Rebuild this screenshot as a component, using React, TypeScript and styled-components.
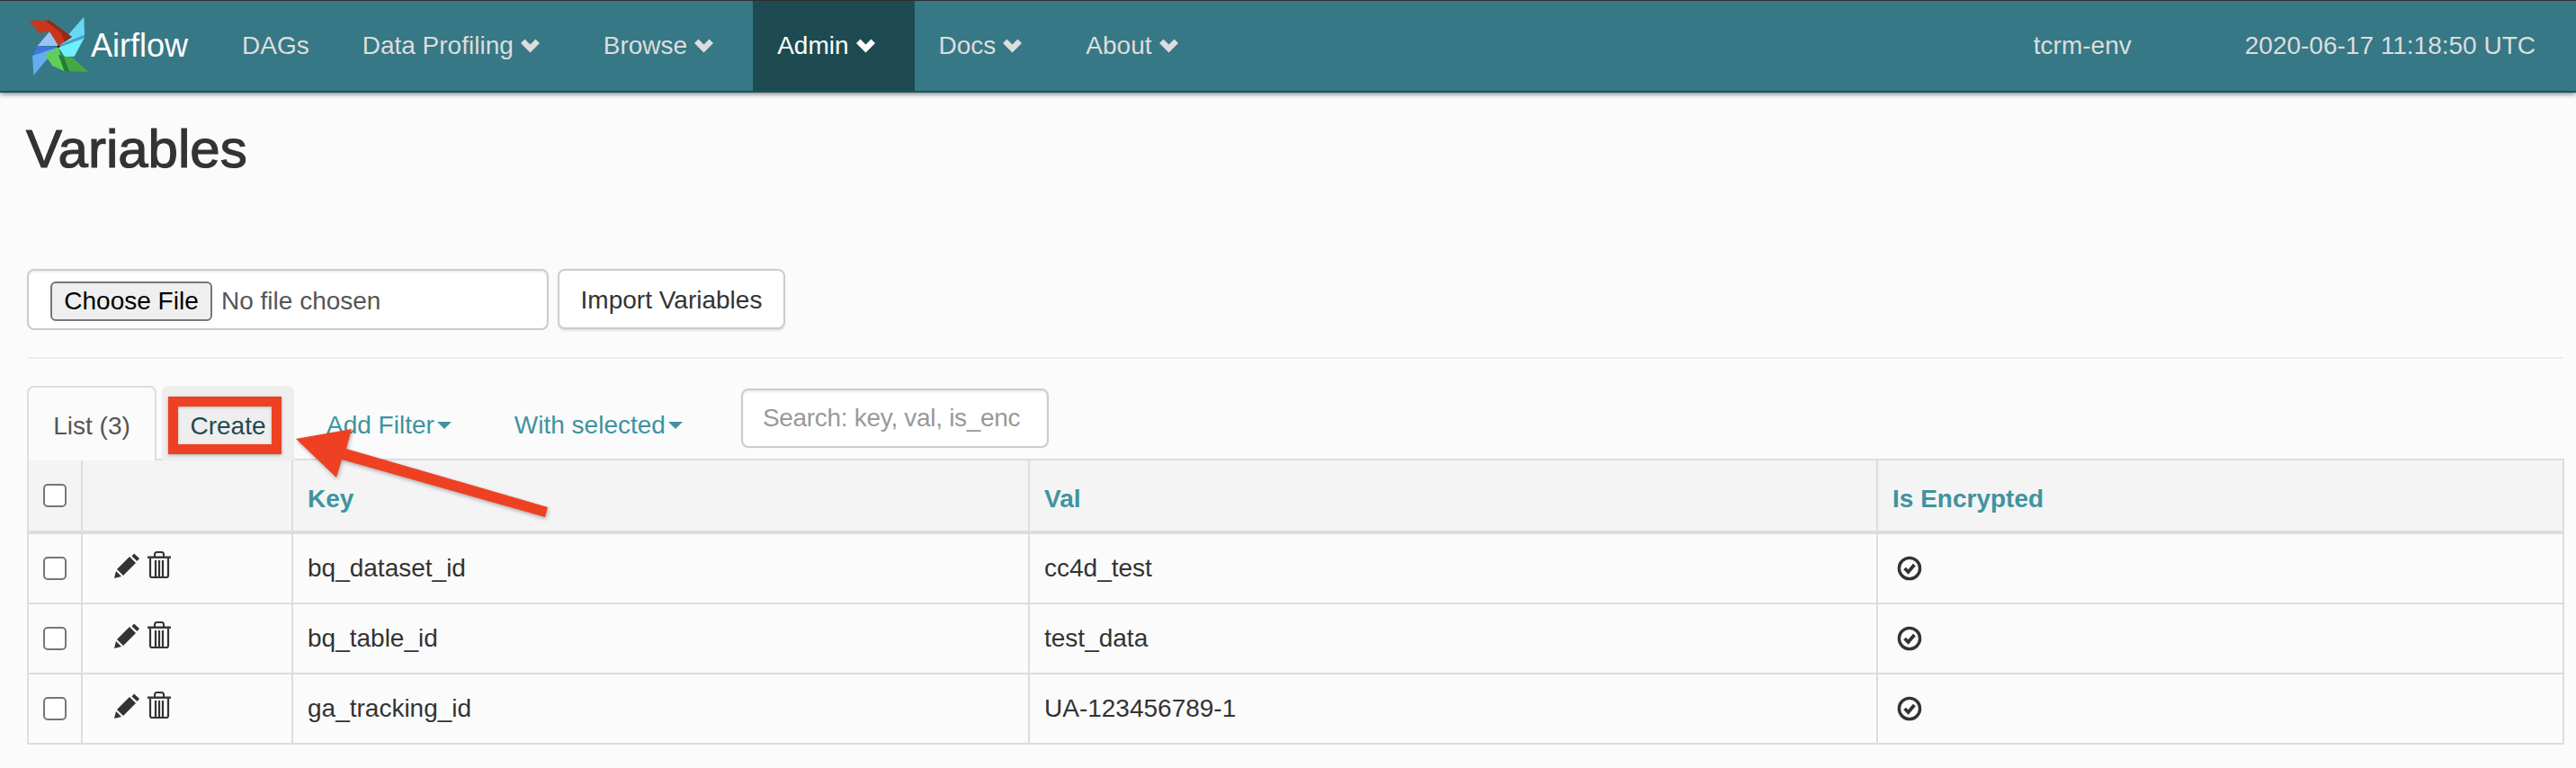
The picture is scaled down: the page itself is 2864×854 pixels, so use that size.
import React from 'react';
import styled, { createGlobalStyle } from 'styled-components';

const GlobalStyle = createGlobalStyle`
  html, body {
    margin: 0;
    padding: 0;
    background: #fbfbfb;
    color: #333;
    font-family: 'Liberation Sans', Arial, sans-serif;
    font-size: 28px;
  }
`;

const Page = styled.div`
  position: relative;
  width: 2864px;
  height: 854px;
  overflow: hidden;
`;

const NavBar = styled.nav`
  display: flex;
  align-items: stretch;
  height: 100px;
  background: #367885;
  border-top: 1px solid #2e2e2e;
  border-bottom: 2px solid #1f525c;
  box-shadow: 0 2px 5px rgba(0, 0, 0, 0.45);
  padding-left: 30px;
`;

const Brand = styled.a`
  display: flex;
  align-items: center;
  gap: 1px;
  width: 212px;
  color: #fff;
  font-size: 36px;
`;

const NavLink = styled.a<{ $active?: boolean; $plain?: boolean }>`
  display: flex;
  align-items: center;
  gap: 8px;
  padding: 0 ${(p) => (p.$plain ? '32px' : '44px')} 0 27px;
  color: ${(p) => (p.$active ? '#fff' : '#ddd')};
  background: ${(p) => (p.$active ? '#1e4a52' : 'transparent')};
`;

const NavRight = styled.div`
  display: flex;
  align-items: center;
  margin-left: auto;
  padding-right: 45px;
  color: #ddd;
  gap: 126px;
`;

const Content = styled.main`
  padding: 0 15px 0 30px;
`;

const Title = styled.h2`
  margin: 30px 0 100px -1px;
  font-size: 60px;
  font-weight: 500;
  line-height: 66px;
  color: #333;
  -webkit-text-stroke: 1.2px #333;
`;

const ImportRow = styled.form`
  display: flex;
  align-items: flex-start;
  gap: 10px;
  margin: 0;
`;

const FileInput = styled.input`
  box-sizing: border-box;
  width: 580px;
  height: 68px;
  padding: 12px 24px;
  background: #fff;
  border: 2px solid #ccc;
  border-radius: 8px;
  box-shadow: inset 0 2px 2px rgba(0, 0, 0, 0.075);
  color: #555;
  font-family: 'Liberation Sans', Arial, sans-serif;
  font-size: 28px;

  &::file-selector-button {
    box-sizing: border-box;
    width: 180px;
    height: 44px;
    margin-right: 10px;
    padding: 0;
    background: #efefef;
    border: 2px solid #767676;
    border-radius: 6px;
    color: #000;
    font-family: 'Liberation Sans', Arial, sans-serif;
    font-size: 28px;
  }
`;

const ImportButton = styled.button`
  box-sizing: border-box;
  height: 67px;
  width: 253px;
  padding: 2px 0 0;
  background: #fff;
  border: 2px solid #ccc;
  border-radius: 8px;
  box-shadow: 0 2px 2px rgba(0, 0, 0, 0.1);
  color: #333;
  font-family: 'Liberation Sans', Arial, sans-serif;
  font-size: 28px;
`;

const Divider = styled.hr`
  height: 2px;
  margin: 30px 0;
  border: 0;
  background: #eee;
`;

const TabsRow = styled.div`
  position: relative;
  z-index: 1;
  display: flex;
  align-items: stretch;
  height: 83px;
  margin-bottom: -2px;
`;

const Tab = styled.a<{ $active?: boolean }>`
  position: relative;
  box-sizing: border-box;
  display: flex;
  align-items: center;
  justify-content: center;
  width: ${(p) => (p.$active ? '144px' : '147px')};
  margin-right: ${(p) => (p.$active ? '6px' : '0')};
  padding-top: 4px;
  background: ${(p) => (p.$active ? '#fbfbfb' : '#eee')};
  border: 2px solid ${(p) => (p.$active ? '#ddd' : '#eee')};
  border-bottom: 0;
  border-radius: 8px 8px 0 0;
  color: ${(p) => (p.$active ? '#555' : '#1e4a52')};
`;

const RedBox = styled.span`
  position: absolute;
  left: 5px;
  top: 10px;
  box-sizing: border-box;
  width: 126px;
  height: 64px;
  border: 11px solid #ee4124;
  box-shadow: 0 1px 3px rgba(0, 0, 0, 0.3), inset 0 1px 3px rgba(0, 0, 0, 0.25);
`;

const FilterLink = styled.a`
  display: flex;
  align-items: center;
  gap: 3px;
  padding: 4px 34px 0 36px;
  color: #40939f;
`;

const Caret = styled.span`
  width: 0;
  height: 0;
  border-top: 8px solid #40939f;
  border-left: 8px solid transparent;
  border-right: 8px solid transparent;
`;

const SearchInput = styled.input`
  box-sizing: border-box;
  width: 342px;
  height: 66px;
  margin: 3px 0 0 31px;
  padding: 0 22px;
  background: #fff;
  border: 2px solid #ccc;
  border-radius: 8px;
  box-shadow: inset 0 2px 2px rgba(0, 0, 0, 0.075);
  font-family: 'Liberation Sans', Arial, sans-serif;
  font-size: 28px;
  letter-spacing: -0.3px;
  color: #555;

  &::placeholder {
    color: #999;
    opacity: 1;
  }
`;

const Table = styled.table`
  width: 2819px;
  table-layout: fixed;
  border-collapse: collapse;
  font-size: 28px;
`;

const HeadCell = styled.th`
  height: 70px;
  padding: 8px 16px 0;
  background: #f4f4f4;
  border: 2px solid #ddd;
  border-bottom-width: 4px;
  color: #40939f;
  font-weight: 700;
  text-align: left;
  vertical-align: middle;
`;

const Cell = styled.td`
  height: 76px;
  padding: 0 16px;
  border: 2px solid #ddd;
  vertical-align: middle;
`;

const Check = styled.input<{ $raised?: boolean }>`
  appearance: none;
  display: block;
  box-sizing: border-box;
  width: 26px;
  height: 26px;
  margin: ${(p) => (p.$raised ? '-8px 0 0' : '0')};
  background: #fff;
  border: 2px solid #767676;
  border-radius: 5px;
`;

const Actions = styled.div`
  display: flex;
  align-items: flex-end;
  gap: 9px;
  padding: 0 0 8px 19px;
`;

const OkWrap = styled.div`
  width: 28px;
  height: 28px;
  margin-left: 5px;
`;

const ArrowLayer = styled.svg`
  position: absolute;
  left: 320px;
  top: 470px;
  z-index: 2;
  overflow: visible;
  filter: drop-shadow(1px 2px 2px rgba(0, 0, 0, 0.3));
`;

const Chevron = () => (
  <svg width="21" height="16" viewBox="0 0 21 16">
    <polygon fill="currentColor" points="0,5 4.5,0.5 10.5,6.5 16.5,0.5 21,5 10.5,15.5" />
  </svg>
);

const Logo = () => (
  <svg width="70" height="70" viewBox="90 50 210 210">
    <polygon fill="#66d8f5" points="280,58 195,155 282,118" />
    <polygon fill="#4c9fd0" points="195,157 282,118 280,135 232,152" />
    <polygon fill="#6ef0fb" points="195,160 280,130 248,190 216,192" />
    <polygon fill="#c9361c" points="97,70 165,70 240,125 195,155 165,108 130,112" />
    <polygon fill="#8f2b18" points="150,70 165,70 240,125 215,142 205,112" />
    <polygon fill="#9ac4f5" points="165,108 125,155 195,155" />
    <polygon fill="#3f78dc" points="125,155 108,188 190,160" />
    <polygon fill="#63aef2" points="108,188 112,253 190,160" />
    <polygon fill="#5fcf58" points="150,185 195,158 215,240 175,222" />
    <polygon fill="#46a845" points="195,185 242,195 295,241 215,240" />
    <polygon fill="#1f7f33" points="195,185 212,190 232,241 215,240" />
    <circle cx="195" cy="157" r="4" fill="#12222a" />
  </svg>
);

const PencilIcon = () => (
  <svg width="28" height="28" viewBox="0 0 28 28">
    <polygon fill="#333" points="0,28 2,20 8,26" />
    <polygon fill="#333" points="3,18 17,4 24,11 10,25" />
    <polygon fill="#333" points="22,0.5 28,6 25.5,9 19.5,3.5" />
  </svg>
);

const TrashIcon = () => (
  <svg width="26" height="30" viewBox="0 0 26 30">
    <path fill="none" stroke="#333" strokeWidth="2" d="M8 6V3.5C8 2 9 1 10.5 1h5C17 1 18 2 18 3.5V6" />
    <rect x="0" y="5.5" width="26" height="2.4" fill="#333" />
    <path
      fill="none"
      stroke="#333"
      strokeWidth="2.2"
      d="M3 8v19c0 1.2.8 2 2 2h16c1.2 0 2-.8 2-2V8M9 10v19M13 10v19M17 10v19"
    />
  </svg>
);

const OkCircleIcon = () => (
  <svg width="28" height="28" viewBox="0 0 28 28">
    <circle cx="14" cy="14" r="11.6" fill="none" stroke="#333" strokeWidth="3.4" />
    <polyline fill="none" stroke="#333" strokeWidth="3.8" points="8.6,14 12.6,18 19.4,10" />
  </svg>
);

const rows = [
  { key: 'bq_dataset_id', val: 'cc4d_test' },
  { key: 'bq_table_id', val: 'test_data' },
  { key: 'ga_tracking_id', val: 'UA-123456789-1' },
];

const navItems = [
  { label: 'Data Profiling' },
  { label: 'Browse' },
  { label: 'Admin', active: true },
  { label: 'Docs' },
  { label: 'About' },
];

export default function App() {
  return (
    <Page>
      <GlobalStyle />
      <NavBar>
        <Brand>
          <Logo />
          Airflow
        </Brand>
        <NavLink $plain>DAGs</NavLink>
        {navItems.map((item) => (
          <NavLink key={item.label} $active={item.active}>
            {item.label}
            <Chevron />
          </NavLink>
        ))}
        <NavRight>
          <span>tcrm-env</span>
          <span>2020-06-17 11:18:50 UTC</span>
        </NavRight>
      </NavBar>
      <Content>
        <Title>Variables</Title>
        <ImportRow>
          <FileInput type="file" />
          <ImportButton type="button">Import Variables</ImportButton>
        </ImportRow>
        <Divider />
        <TabsRow>
          <Tab $active>List (3)</Tab>
          <Tab>
            Create
            <RedBox />
          </Tab>
          <FilterLink>
            Add Filter
            <Caret />
          </FilterLink>
          <FilterLink>
            With selected
            <Caret />
          </FilterLink>
          <SearchInput placeholder="Search: key, val, is_enc" />
        </TabsRow>
        <Table>
          <colgroup>
            <col width="60" />
            <col width="234" />
            <col width="819" />
            <col width="943" />
            <col width="763" />
          </colgroup>
          <thead>
            <tr>
              <HeadCell>
                <Check type="checkbox" $raised />
              </HeadCell>
              <HeadCell />
              <HeadCell>Key</HeadCell>
              <HeadCell>Val</HeadCell>
              <HeadCell>Is Encrypted</HeadCell>
            </tr>
          </thead>
          <tbody>
            {rows.map((row) => (
              <tr key={row.key}>
                <Cell>
                  <Check type="checkbox" />
                </Cell>
                <Cell>
                  <Actions>
                    <PencilIcon />
                    <TrashIcon />
                  </Actions>
                </Cell>
                <Cell>{row.key}</Cell>
                <Cell>{row.val}</Cell>
                <Cell>
                  <OkWrap>
                    <OkCircleIcon />
                  </OkWrap>
                </Cell>
              </tr>
            ))}
          </tbody>
        </Table>
      </Content>
      <ArrowLayer width="300" height="115" viewBox="320 470 300 115">
        <polygon fill="#ee4124" points="329,488 391,477 385,499 609,564 606,575 380,511 374,531" />
      </ArrowLayer>
    </Page>
  );
}
